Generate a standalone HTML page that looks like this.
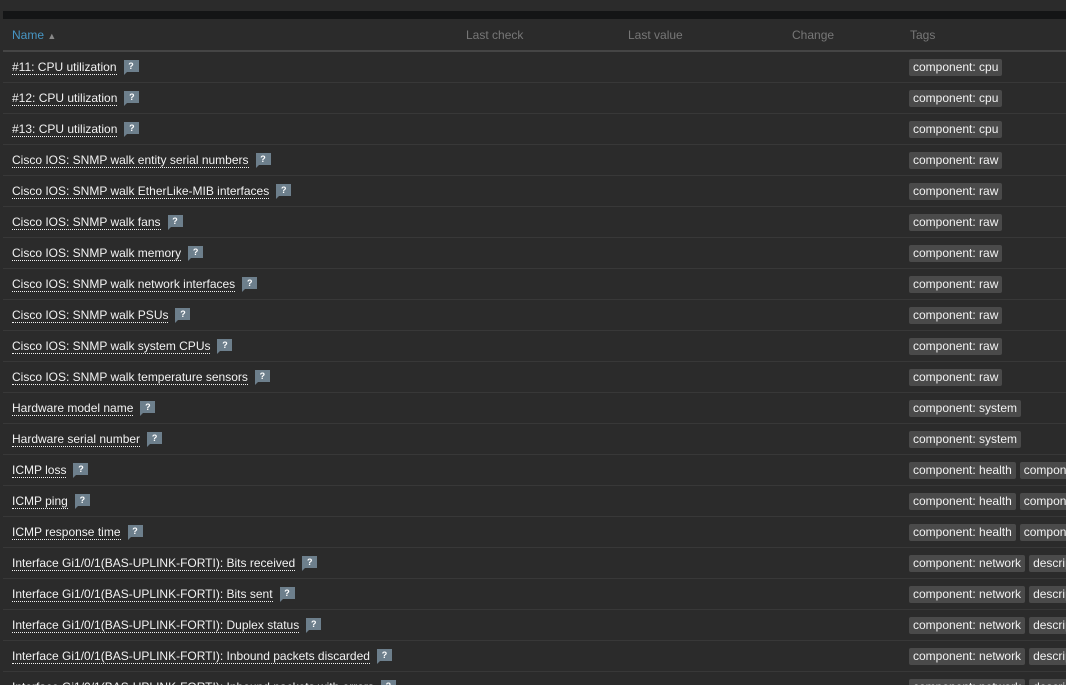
<!DOCTYPE html>
<html style="overflow:hidden;width:1066px;height:685px"><head><style>
body{margin:0;width:1066px;height:685px;overflow:hidden;background:#2b2b2b;font-family:"Liberation Sans",Arial,sans-serif;font-size:12px;color:#f2f2f2;position:relative}
.bar{position:absolute;left:3px;right:0;top:11px;height:8px;background:#141516}
.hd{position:absolute;top:28px;color:#777;font-size:12px}
.hl{position:absolute;left:3px;right:0;top:50px;height:2px;background:#454545}
.row{position:absolute;left:3px;right:0;height:31px;border-bottom:1px solid #383838;box-sizing:border-box;overflow:hidden}
.nm{position:absolute;left:9px;top:8px;white-space:nowrap}
.nm a{color:#f2f2f2;text-decoration:none;border-bottom:1px dotted #f2f2f2}
.q{display:inline-block;width:15px;height:12px;background:#6d7f8c;color:#fff;font-size:9px;font-weight:bold;text-align:center;line-height:12px;margin-left:7px;vertical-align:2px;position:relative}
.q:after{content:"";position:absolute;left:0;bottom:-3px;border-left:3px solid #6d7f8c;border-bottom:3px solid transparent}
.tg{position:absolute;left:906px;top:7px;white-space:nowrap}
.tg span{display:inline-block;background:#4a4a4a;border-radius:2px;padding:0 4px;height:17px;line-height:17px;margin-right:4px}
</style></head><body>
<div class="bar"></div>
<div class="hd" style="left:12px;color:#4796c4">Name <span style="color:#888;font-size:9px">▲</span></div>
<div class="hd" style="left:466px">Last check</div>
<div class="hd" style="left:628px">Last value</div>
<div class="hd" style="left:792px">Change</div>
<div class="hd" style="left:910px">Tags</div>
<div class="hl"></div>

<div class="row" style="top:52px"><div class="nm"><a>#11: CPU utilization</a><span class="q">?</span></div><div class="tg"><span>component: cpu</span></div></div>
<div class="row" style="top:83px"><div class="nm"><a>#12: CPU utilization</a><span class="q">?</span></div><div class="tg"><span>component: cpu</span></div></div>
<div class="row" style="top:114px"><div class="nm"><a>#13: CPU utilization</a><span class="q">?</span></div><div class="tg"><span>component: cpu</span></div></div>
<div class="row" style="top:145px"><div class="nm"><a>Cisco IOS: SNMP walk entity serial numbers</a><span class="q">?</span></div><div class="tg"><span>component: raw</span></div></div>
<div class="row" style="top:176px"><div class="nm"><a>Cisco IOS: SNMP walk EtherLike-MIB interfaces</a><span class="q">?</span></div><div class="tg"><span>component: raw</span></div></div>
<div class="row" style="top:207px"><div class="nm"><a>Cisco IOS: SNMP walk fans</a><span class="q">?</span></div><div class="tg"><span>component: raw</span></div></div>
<div class="row" style="top:238px"><div class="nm"><a>Cisco IOS: SNMP walk memory</a><span class="q">?</span></div><div class="tg"><span>component: raw</span></div></div>
<div class="row" style="top:269px"><div class="nm"><a>Cisco IOS: SNMP walk network interfaces</a><span class="q">?</span></div><div class="tg"><span>component: raw</span></div></div>
<div class="row" style="top:300px"><div class="nm"><a>Cisco IOS: SNMP walk PSUs</a><span class="q">?</span></div><div class="tg"><span>component: raw</span></div></div>
<div class="row" style="top:331px"><div class="nm"><a>Cisco IOS: SNMP walk system CPUs</a><span class="q">?</span></div><div class="tg"><span>component: raw</span></div></div>
<div class="row" style="top:362px"><div class="nm"><a>Cisco IOS: SNMP walk temperature sensors</a><span class="q">?</span></div><div class="tg"><span>component: raw</span></div></div>
<div class="row" style="top:393px"><div class="nm"><a>Hardware model name</a><span class="q">?</span></div><div class="tg"><span>component: system</span></div></div>
<div class="row" style="top:424px"><div class="nm"><a>Hardware serial number</a><span class="q">?</span></div><div class="tg"><span>component: system</span></div></div>
<div class="row" style="top:455px"><div class="nm"><a>ICMP loss</a><span class="q">?</span></div><div class="tg"><span>component: health</span><span>component: network</span></div></div>
<div class="row" style="top:486px"><div class="nm"><a>ICMP ping</a><span class="q">?</span></div><div class="tg"><span>component: health</span><span>component: network</span></div></div>
<div class="row" style="top:517px"><div class="nm"><a>ICMP response time</a><span class="q">?</span></div><div class="tg"><span>component: health</span><span>component: network</span></div></div>
<div class="row" style="top:548px"><div class="nm"><a>Interface Gi1/0/1(BAS-UPLINK-FORTI): Bits received</a><span class="q">?</span></div><div class="tg"><span>component: network</span><span>description</span></div></div>
<div class="row" style="top:579px"><div class="nm"><a>Interface Gi1/0/1(BAS-UPLINK-FORTI): Bits sent</a><span class="q">?</span></div><div class="tg"><span>component: network</span><span>description</span></div></div>
<div class="row" style="top:610px"><div class="nm"><a>Interface Gi1/0/1(BAS-UPLINK-FORTI): Duplex status</a><span class="q">?</span></div><div class="tg"><span>component: network</span><span>description</span></div></div>
<div class="row" style="top:641px"><div class="nm"><a>Interface Gi1/0/1(BAS-UPLINK-FORTI): Inbound packets discarded</a><span class="q">?</span></div><div class="tg"><span>component: network</span><span>description</span></div></div>
<div class="row" style="top:672px;height:13px;border:none"><div class="nm"><a>Interface Gi1/0/1(BAS-UPLINK-FORTI): Inbound packets with errors</a><span class="q">?</span></div><div class="tg"><span>component: network</span><span>description</span></div></div>
</body></html>
